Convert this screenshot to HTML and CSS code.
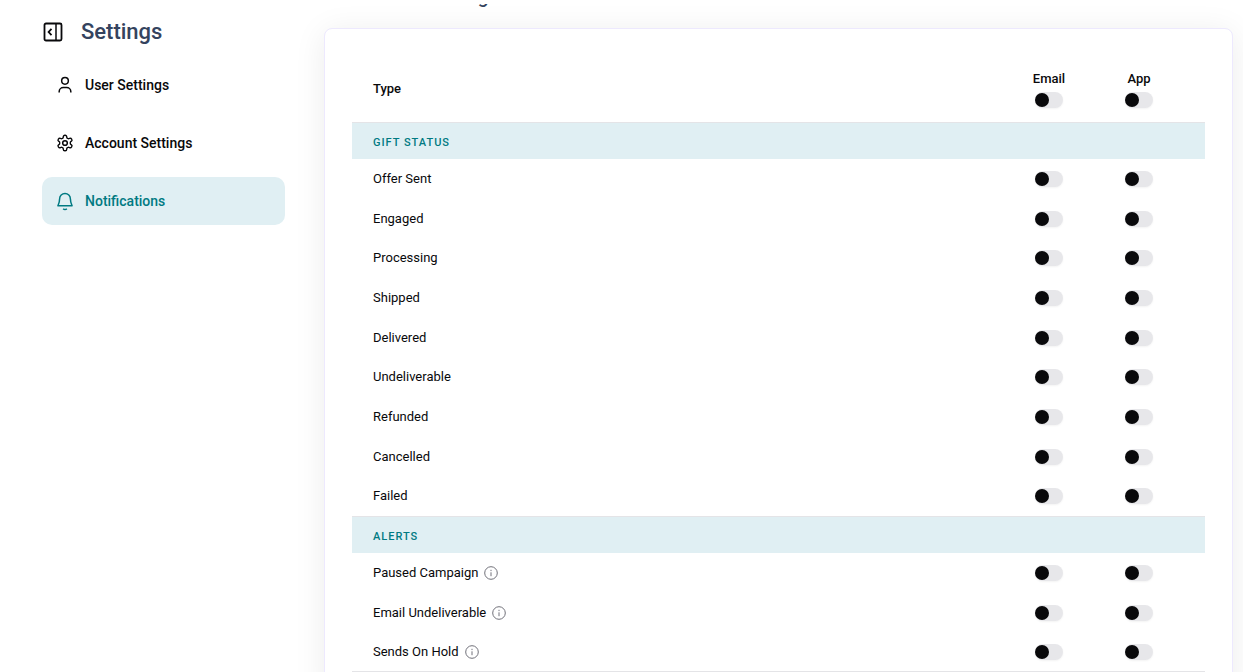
FILE: index.html
```html
<!DOCTYPE html>
<html lang="en">
<head>
    <meta charset="UTF-8">
    <meta name="viewport" content="width=device-width, initial-scale=1.0">
    <title>Notification Settings</title>
    <link rel="stylesheet" href="styles.css">
</head>
<body>
    <div class="sidebar">
        <div class="sidebar-header">
            <button class="collapse-btn" aria-label="Collapse menu">
                <svg width="20" height="20" viewBox="0 0 20 20" fill="none" stroke="currentColor" stroke-width="1.8">
                    <rect x="1.5" y="1.5" width="17" height="17" rx="1.5"/>
                    <path d="M13 2v16" stroke-width="1.5"/>
                    <path d="M8.500 6.800L5.600 10l2.900 3.200"/>
                </svg>
            </button>
            <h1 class="sidebar-title">Settings</h1>
        </div>
        <nav class="sidebar-nav">
            <a class="nav-item" href="#user">
                <svg class="nav-icon" viewBox="0 0 24 24">
                    <circle cx="12" cy="7" r="4"/>
                    <path d="M5 21v-1a5 5 0 0 1 5-5h4a5 5 0 0 1 5 5v1"/>
                </svg>
                User Settings
            </a>
            <a class="nav-item" href="#account">
                <svg class="nav-icon" viewBox="0 0 24 24">
                    <path d="M12.22 2h-.44a2 2 0 0 0-2 2v.18a2 2 0 0 1-1 1.73l-.43.25a2 2 0 0 1-2 0l-.15-.08a2 2 0 0 0-2.73.73l-.22.38a2 2 0 0 0 .73 2.73l.15.1a2 2 0 0 1 1 1.72v.51a2 2 0 0 1-1 1.74l-.15.09a2 2 0 0 0-.73 2.73l.22.38a2 2 0 0 0 2.73.73l.15-.08a2 2 0 0 1 2 0l.43.25a2 2 0 0 1 1 1.73V20a2 2 0 0 0 2 2h.44a2 2 0 0 0 2-2v-.18a2 2 0 0 1 1-1.73l.43-.25a2 2 0 0 1 2 0l.15.08a2 2 0 0 0 2.73-.73l.22-.39a2 2 0 0 0-.73-2.73l-.15-.08a2 2 0 0 1-1-1.74v-.5a2 2 0 0 1 1-1.74l.15-.09a2 2 0 0 0 .73-2.73l-.22-.38a2 2 0 0 0-2.73-.73l-.15.08a2 2 0 0 1-2 0l-.43-.25a2 2 0 0 1-1-1.73V4a2 2 0 0 0-2-2z" transform="translate(.9 .9) scale(.925)"/>
                    <circle cx="12" cy="12" r="2.8"/>
                </svg>
                Account Settings
            </a>
            <a class="nav-item active" href="#notifications">
                <svg class="nav-icon" viewBox="0 0 24 24">
                    <path d="M12 3a6.500 6.500 0 0 0-6.500 6.500c0 4-.8 5.500-2 8.200h17c-1.200-2.700-2-4.200-2-8.200A6.500 6.500 0 0 0 12 3z"/>
                    <path d="M9.800 21.200c1.200 1.200 3.200 1.200 4.400 0"/>
                </svg>
                Notifications
            </a>
        </nav>
    </div>

    <div class="main-content">
        <h2 class="page-title">Notification Settings</h2>
        <div class="card">
            <table class="settings-table">
                <thead>
                    <tr>
                        <th class="type-col">Type</th>
                        <th class="toggle-col"><label for="all-email">Email</label><input type="checkbox" class="toggle" id="all-email"></th>
                        <th class="toggle-col last"><label for="all-app">App</label><input type="checkbox" class="toggle" id="all-app"></th>
                    </tr>
                </thead>
                <tbody class="group-title">
                    <tr><th colspan="3">GIFT STATUS</th></tr>
                </tbody>
                <tbody class="group-rows">
                    <tr>
                        <td>Offer Sent</td>
                        <td class="toggle-col"><input type="checkbox" class="toggle" aria-label="Offer Sent email"></td>
                        <td class="toggle-col last"><input type="checkbox" class="toggle" aria-label="Offer Sent app"></td>
                    </tr>
                    <tr>
                        <td>Engaged</td>
                        <td class="toggle-col"><input type="checkbox" class="toggle" aria-label="Engaged email"></td>
                        <td class="toggle-col last"><input type="checkbox" class="toggle" aria-label="Engaged app"></td>
                    </tr>
                    <tr>
                        <td>Processing</td>
                        <td class="toggle-col"><input type="checkbox" class="toggle" aria-label="Processing email"></td>
                        <td class="toggle-col last"><input type="checkbox" class="toggle" aria-label="Processing app"></td>
                    </tr>
                    <tr>
                        <td>Shipped</td>
                        <td class="toggle-col"><input type="checkbox" class="toggle" aria-label="Shipped email"></td>
                        <td class="toggle-col last"><input type="checkbox" class="toggle" aria-label="Shipped app"></td>
                    </tr>
                    <tr>
                        <td>Delivered</td>
                        <td class="toggle-col"><input type="checkbox" class="toggle" aria-label="Delivered email"></td>
                        <td class="toggle-col last"><input type="checkbox" class="toggle" aria-label="Delivered app"></td>
                    </tr>
                    <tr>
                        <td>Undeliverable</td>
                        <td class="toggle-col"><input type="checkbox" class="toggle" aria-label="Undeliverable email"></td>
                        <td class="toggle-col last"><input type="checkbox" class="toggle" aria-label="Undeliverable app"></td>
                    </tr>
                    <tr>
                        <td>Refunded</td>
                        <td class="toggle-col"><input type="checkbox" class="toggle" aria-label="Refunded email"></td>
                        <td class="toggle-col last"><input type="checkbox" class="toggle" aria-label="Refunded app"></td>
                    </tr>
                    <tr>
                        <td>Cancelled</td>
                        <td class="toggle-col"><input type="checkbox" class="toggle" aria-label="Cancelled email"></td>
                        <td class="toggle-col last"><input type="checkbox" class="toggle" aria-label="Cancelled app"></td>
                    </tr>
                    <tr>
                        <td>Failed</td>
                        <td class="toggle-col"><input type="checkbox" class="toggle" aria-label="Failed email"></td>
                        <td class="toggle-col last"><input type="checkbox" class="toggle" aria-label="Failed app"></td>
                    </tr>
                </tbody>
                <tbody class="group-title">
                    <tr><th colspan="3">ALERTS</th></tr>
                </tbody>
                <tbody class="group-rows">
                    <tr>
                        <td>
                            <div class="type-name">
                                Paused Campaign
                                <svg class="info-icon" viewBox="0 0 14 14"><circle cx="7" cy="7" r="6.3"/><path d="M7 6.300v3.900M7 3.800v1.300"/></svg>
                            </div>
                        </td>
                        <td class="toggle-col"><input type="checkbox" class="toggle" aria-label="Paused Campaign email"></td>
                        <td class="toggle-col last"><input type="checkbox" class="toggle" aria-label="Paused Campaign app"></td>
                    </tr>
                    <tr>
                        <td>
                            <div class="type-name">
                                Email Undeliverable
                                <svg class="info-icon" viewBox="0 0 14 14"><circle cx="7" cy="7" r="6.3"/><path d="M7 6.300v3.900M7 3.800v1.300"/></svg>
                            </div>
                        </td>
                        <td class="toggle-col"><input type="checkbox" class="toggle" aria-label="Email Undeliverable email"></td>
                        <td class="toggle-col last"><input type="checkbox" class="toggle" aria-label="Email Undeliverable app"></td>
                    </tr>
                    <tr>
                        <td>
                            <div class="type-name">
                                Sends On Hold
                                <svg class="info-icon" viewBox="0 0 14 14"><circle cx="7" cy="7" r="6.3"/><path d="M7 6.300v3.900M7 3.800v1.300"/></svg>
                            </div>
                        </td>
                        <td class="toggle-col"><input type="checkbox" class="toggle" aria-label="Sends On Hold email"></td>
                        <td class="toggle-col last"><input type="checkbox" class="toggle" aria-label="Sends On Hold app"></td>
                    </tr>
                </tbody>
            </table>
        </div>
    </div>
</body>
</html>
```
FILE: styles.css
```css
* {
    margin: 0;
    padding: 0;
    box-sizing: border-box;
}

body {
    font-family: Roboto, "Liberation Sans", sans-serif;
    background: #fff;
    color: #09090b;
    height: 100vh;
    overflow: hidden;
    display: flex;
}

/* Sidebar */
.sidebar {
    flex: 0 0 285px;
    padding: 16px 0 0 42px;
}

.sidebar-header {
    display: flex;
    align-items: center;
    gap: 18px;
    height: 32px;
    padding-left: 1px;
}

.collapse-btn {
    display: flex;
    border: none;
    background: none;
    color: #09090b;
    cursor: pointer;
}

.sidebar-title {
    font-size: 22px;
    font-weight: 500;
    line-height: 32px;
    color: #34435e;
}

.sidebar-nav {
    display: flex;
    flex-direction: column;
    gap: 10px;
    margin-top: 13px;
}

.nav-item {
    display: flex;
    align-items: center;
    gap: 10px;
    height: 48px;
    padding: 0 13px;
    border-radius: 10px;
    font-size: 14px;
    font-weight: 500;
    color: #09090b;
    text-decoration: none;
}

.nav-item.active {
    background: #e0eff3;
    color: #007a82;
}

.nav-icon {
    width: 20px;
    height: 20px;
    fill: none;
    stroke: currentColor;
    stroke-width: 1.8;
    stroke-linejoin: round;
}

/* Main area, scrolled past the page title */
.main-content {
    flex: 1;
    margin-top: 4px;
    padding: 0 10px 40px 39px;
    overflow-y: auto;
    scrollbar-width: none;
}

.page-title {
    font-size: 19px;
    font-weight: 500;
    line-height: 24px;
    color: #34435e;
    margin: -19px 0 19px;
}

.card {
    padding: 27px;
    background: #fff;
    border: 1px solid #ede9fe;
    border-radius: 8px;
    box-shadow: 0 4px 32px rgba(0, 0, 0, 0.08);
}

/* Table */
.settings-table {
    width: 100%;
    border-collapse: separate;
    border-spacing: 0;
    font-size: 13px;
    line-height: 18px;
    text-align: left;
}

.settings-table th {
    font-weight: 500;
}

.settings-table thead tr {
    height: 66px;
}

.settings-table th:first-child,
.settings-table td:first-child {
    padding-left: 21px;
}

.settings-table .toggle-col {
    width: 90px;
    text-align: center;
}

.settings-table .toggle-col.last {
    width: 111px;
    padding-right: 21px;
}

.toggle-col label {
    display: block;
    margin-bottom: 4px;
}

.group-title th {
    height: 37px;
    padding-top: 3px;
    border-top: 1px solid #e4e4e7;
    background: #e0eff3;
    color: #007a82;
    font-size: 11px;
    letter-spacing: 1px;
}

.group-rows tr {
    height: 40px;
}

.group-rows tr:nth-child(3n + 2) {
    height: 39px;
}

.group-rows:last-child tr:last-child td {
    border-bottom: 1px solid #e4e4e7;
}

.type-name {
    display: flex;
    align-items: center;
    gap: 6px;
}

.info-icon {
    width: 14px;
    height: 14px;
    fill: none;
    stroke: #71717a;
}

/* Toggle switch */
.toggle {
    appearance: none;
    display: block;
    width: 28px;
    height: 16px;
    margin: 0 auto;
    padding: 1px 0;
    border-radius: 8px;
    background: #e7e7ea;
    box-shadow: 0 1px 2px rgba(0, 0, 0, 0.05);
    cursor: pointer;
}

.toggle::before {
    content: "";
    display: block;
    width: 14px;
    height: 14px;
    border-radius: 50%;
    background: #09090b;
}

.toggle:checked::before {
    margin-left: 14px;
}
```
